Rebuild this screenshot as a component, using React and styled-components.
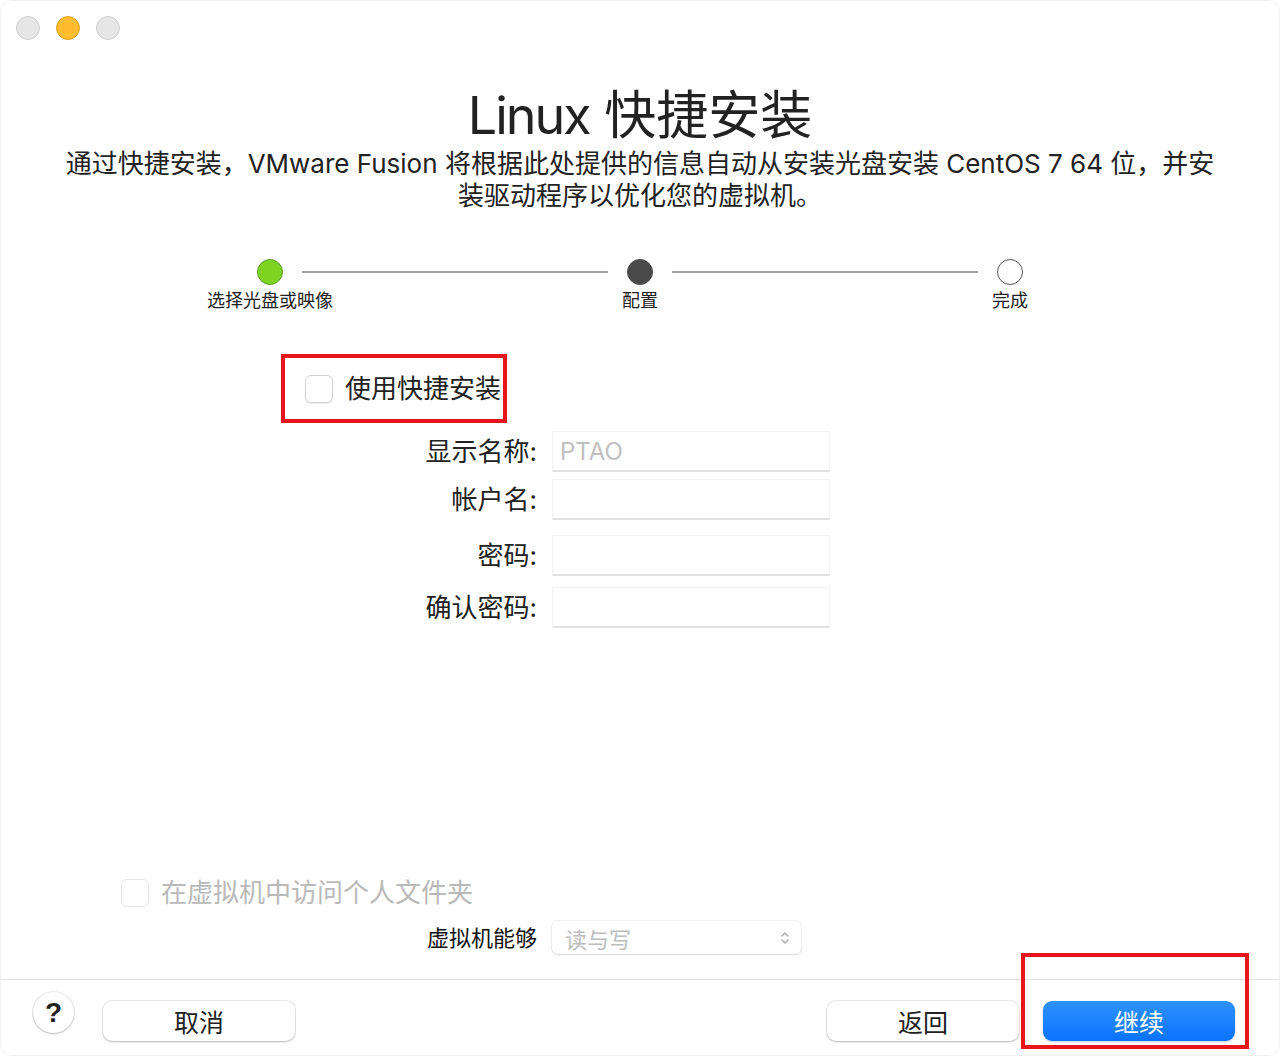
import React from 'react';
import styled, { createGlobalStyle } from 'styled-components';

const GlobalStyle = createGlobalStyle`
  html, body {
    margin: 0;
    padding: 0;
    background: #ffffff;
  }
  body {
    font-family: Inter, "Noto Sans CJK SC", sans-serif;
    color: #222;
  }
  * {
    box-sizing: border-box;
  }
`;

const steps = [
  { label: '选择光盘或映像', state: 'done' },
  { label: '配置', state: 'current' },
  { label: '完成', state: 'todo' },
];

const fields = [
  { label: '显示名称:', placeholder: 'PTAO', space: 0 },
  { label: '帐户名:', placeholder: '', space: 7 },
  { label: '密码:', placeholder: '', space: 15 },
  { label: '确认密码:', placeholder: '', space: 11 },
];

const App = () => (
  <>
    <GlobalStyle />
    <Window>
      <TitleBar>
        <Light />
        <Light $color="#febc2e" $edge="#e0a027" />
        <Light />
      </TitleBar>

      <Content>
        <Heading>
          <Latin>Linux</Latin> 快捷安装
        </Heading>
        <Description>
          通过快捷安装，VMware Fusion 将根据此处提供的信息自动从安装光盘安装 CentOS 7 64 位，并安
          <br />
          装驱动程序以优化您的虚拟机。
        </Description>

        <Stepper>
          {steps.map((step, i) => (
            <React.Fragment key={step.label}>
              {i > 0 && <StepLine style={{ gridColumn: i * 2 }} />}
              <Dot $state={step.state} style={{ gridColumn: i * 2 + 1 }} />
            </React.Fragment>
          ))}
          {steps.map((step, i) => (
            <StepLabel key={step.label} style={{ gridColumn: i * 2 + 1 }}>
              {step.label}
            </StepLabel>
          ))}
        </Stepper>

        <Highlight>
          <CheckRow>
            <Checkbox />
            <CheckText>使用快捷安装</CheckText>
          </CheckRow>
        </Highlight>

        <Form>
          {fields.map(f => (
            <Field key={f.label} $space={f.space}>
              <FieldLabel>{f.label}</FieldLabel>
              <TextInput placeholder={f.placeholder} />
            </Field>
          ))}
        </Form>

        <Spacer />

        <SharedRow>
          <Checkbox $disabled />
          <CheckText $disabled>在虚拟机中访问个人文件夹</CheckText>
        </SharedRow>

        <AccessRow>
          <AccessLabel>虚拟机能够</AccessLabel>
          <Select>
            <span>读与写</span>
            <svg width="10" height="16" viewBox="0 0 10 16" fill="none" stroke="#a8a8a8" strokeWidth="1.4" strokeLinecap="round" strokeLinejoin="round">
              <path d="M2 6 L5 3 L8 6" />
              <path d="M2 10 L5 13 L8 10" />
            </svg>
          </Select>
        </AccessRow>
      </Content>

      <Footer>
        <HelpButton>?</HelpButton>
        <Button>取消</Button>
        <FooterSpacer />
        <Button>返回</Button>
        <Marked>
          <Button $primary>继续</Button>
        </Marked>
      </Footer>
    </Window>
  </>
);

const Window = styled.div`
  width: 1280px;
  height: 1056px;
  display: flex;
  flex-direction: column;
  border: 1px solid #f0f0f0;
  border-radius: 12px;
  overflow: hidden;
  background: #fff;
`;

const TitleBar = styled.div`
  display: flex;
  gap: 16px;
  padding: 15px 0 0 15px;
  height: 56px;
`;

const Light = styled.span`
  width: 24px;
  height: 24px;
  border-radius: 50%;
  background: ${p => p.$color || '#e6e6e6'};
  border: 1px solid ${p => p.$edge || '#cfcfcf'};
`;

const Content = styled.div`
  flex: 1;
  display: flex;
  flex-direction: column;
  padding-bottom: 25px;
`;

const Heading = styled.h1`
  margin: 27px 0 0;
  font-size: 52px;
  line-height: 64px;
  font-weight: 400;
  text-align: center;
  color: #222;
`;

const Latin = styled.span`
  letter-spacing: -2px;
`;

const Description = styled.p`
  margin: 0;
  font-size: 26px;
  line-height: 32px;
  text-align: center;
  color: #222;
`;

const Stepper = styled.div`
  display: grid;
  grid-template-columns: 26px 1fr 26px 1fr 26px;
  align-items: center;
  width: 766px;
  margin: 47px auto 0;
  row-gap: 4px;
`;

const StepLine = styled.div`
  grid-row: 1;
  height: 2px;
  margin: 0 19px;
  background: #a2a2a2;
`;

const dotColors = {
  done: { bg: '#7ed321', edge: '#5e9a2a' },
  current: { bg: '#4a4a4a', edge: '#4a4a4a' },
  todo: { bg: '#ffffff', edge: '#555555' },
};

const Dot = styled.div`
  grid-row: 1;
  width: 26px;
  height: 26px;
  border-radius: 50%;
  background: ${p => dotColors[p.$state].bg};
  border: 1px solid ${p => dotColors[p.$state].edge};
`;

const StepLabel = styled.div`
  grid-row: 2;
  justify-self: center;
  white-space: nowrap;
  font-size: 18px;
  line-height: 24px;
  color: #222;
`;

const Highlight = styled.div`
  align-self: flex-start;
  margin: 41px 0 0 280px;
  border: 4px solid #e8141b;
  padding: 0 2px 0 20px;
  height: 69px;
  display: flex;
  align-items: center;
`;

const CheckRow = styled.label`
  display: flex;
  align-items: center;
  gap: 12px;
`;

const Checkbox = styled.span`
  width: 28px;
  height: 28px;
  border-radius: 6px;
  background: #fff;
  border: 1px solid ${p => (p.$disabled ? '#e6e6e6' : '#d2d2d2')};
  box-shadow: ${p => (p.$disabled ? 'none' : '0 1px 1px rgba(0, 0, 0, 0.08)')};
`;

const CheckText = styled.span`
  font-size: 26px;
  line-height: 32px;
  color: ${p => (p.$disabled ? '#b9b9b9' : '#222')};
`;

const Form = styled.div`
  display: flex;
  flex-direction: column;
  margin: 8px 0 0 404px;
`;

const Field = styled.div`
  display: grid;
  grid-template-columns: 132px 278px;
  column-gap: 15px;
  align-items: center;
  margin-top: ${p => p.$space}px;
`;

const FieldLabel = styled.span`
  text-align: right;
  font-size: 26px;
  line-height: 32px;
  color: #222;
`;

const TextInput = styled.input`
  height: 41px;
  border: 1px solid #f2f2f2;
  border-bottom: 2px solid #e2e2e2;
  padding: 0 7px;
  font-family: inherit;
  font-size: 24px;
  color: #222;
  outline: none;
  background: #fff;

  &::placeholder {
    color: #c0c0c0;
  }
`;

const Spacer = styled.div`
  flex: 1;
`;

const SharedRow = styled.div`
  display: flex;
  align-items: center;
  gap: 12px;
  margin-left: 120px;
`;

const AccessRow = styled.div`
  display: grid;
  grid-template-columns: 132px 249px;
  column-gap: 15px;
  align-items: center;
  margin: 12px 0 0 404px;
`;

const AccessLabel = styled.span`
  text-align: right;
  font-size: 22px;
  line-height: 28px;
  color: #111;
`;

const Select = styled.div`
  height: 33px;
  display: flex;
  align-items: center;
  justify-content: space-between;
  padding: 0 11px 0 13px;
  border-radius: 6px;
  background: #fff;
  box-shadow: 0 0 0 1px rgba(0, 0, 0, 0.05), 0 1px 2px rgba(0, 0, 0, 0.12);
  font-size: 22px;
  color: #bdbdbd;
`;

const Footer = styled.div`
  height: 76px;
  display: flex;
  align-items: center;
  gap: 24px;
  padding: 0 44px 0 32px;
  border-top: 1px solid #e2e2e2;
`;

const HelpButton = styled.button`
  width: 41px;
  height: 41px;
  margin: -10px 5px 0 0;
  border-radius: 50%;
  border: none;
  background: #fff;
  box-shadow: 0 0 0 1px rgba(0, 0, 0, 0.08), 0 1px 2px rgba(0, 0, 0, 0.22);
  font-family: "Liberation Sans", sans-serif;
  font-size: 28px;
  font-weight: 700;
  color: #222;
  padding: 0;
`;

const FooterSpacer = styled.div`
  flex: 1;
`;

const Button = styled.button`
  width: 192px;
  height: 40px;
  margin-top: 6px;
  border: none;
  border-radius: 9px;
  font-family: Inter, "Noto Sans CJK SC", sans-serif;
  font-size: 25px;
  color: ${p => (p.$primary ? '#fff' : '#222')};
  background: ${p => (p.$primary ? 'linear-gradient(#2f92ff, #0a73ff)' : '#fff')};
  box-shadow: ${p =>
    p.$primary
      ? '0 1px 2px rgba(0, 60, 160, 0.25)'
      : '0 0 0 1px rgba(0, 0, 0, 0.08), 0 1px 2px rgba(0, 0, 0, 0.22)'};
  padding: 0;
`;

const Marked = styled.div`
  position: relative;
  display: flex;

  &::after {
    content: '';
    position: absolute;
    top: -42px;
    left: -22px;
    right: -14px;
    bottom: -8px;
    border: 4px solid #e8141b;
    pointer-events: none;
  }
`;

export default App;
